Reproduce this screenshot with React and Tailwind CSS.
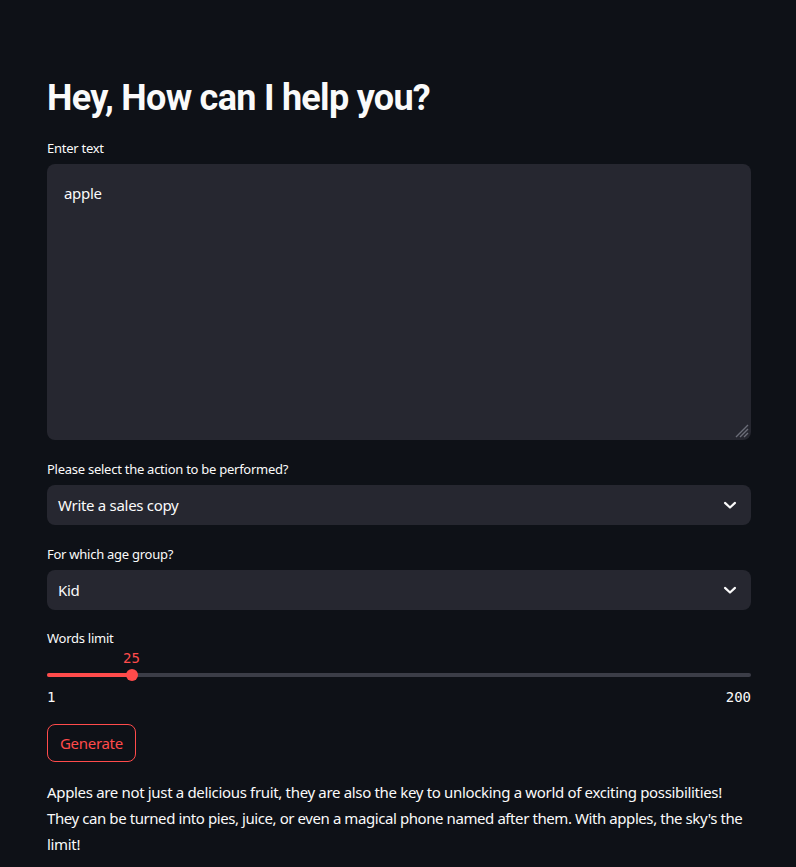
import React from "react";

function Chevron() {
  return (
    <svg width="20" height="20" viewBox="0 0 24 24" fill="none" stroke="#fafafa" strokeWidth="2.6" strokeLinecap="round" strokeLinejoin="round">
      <path d="M6 9.5l6 5.5 6-5.5" />
    </svg>
  );
}

const mono = { fontFamily: '"DejaVu Sans Mono", "Liberation Mono", monospace' };

export default function App() {
  return (
    <div className="min-h-[867px] w-full bg-[#0e1117] text-[#fafafa]" style={{ fontFamily: '"Source Sans Pro", "Noto Sans", sans-serif' }}>
      <div className="ml-[47px] w-[704px] pt-[72px] pb-6">
        <h1 className="text-[36px] font-bold leading-[52px] tracking-[-0.02em] text-[#fafafa]" style={{ fontFamily: 'Roboto, "Noto Sans", sans-serif' }}>Hey, How can I help you?</h1>

        <div className="mt-[14px]">
          <label className="block text-[13px] leading-[20px] tracking-[-0.02em] mb-[6px]">Enter text</label>
          <div className="relative h-[276px] rounded-lg bg-[#262730] px-[17px] pt-[18px]">
            <div className="text-[15px] tracking-[-0.02em] leading-[22px]">apple</div>
            <svg className="absolute right-[2px] bottom-[2px]" width="17" height="17" viewBox="0 0 17 17">
              <path d="M16 4L4 16M16 8L8 16M16 12L12 16" stroke="#6b6d78" strokeWidth="1.4" />
            </svg>
          </div>
        </div>

        <div className="mt-[19px]">
          <label className="block text-[13px] leading-[20px] tracking-[-0.02em] mb-[6px]">Please select the action to be performed?</label>
          <div className="flex h-[40px] items-center justify-between rounded-lg bg-[#262730] pl-[11px] pr-[11px]">
            <span className="text-[15px] tracking-[-0.02em]">Write a sales copy</span>
            <Chevron />
          </div>
        </div>

        <div className="mt-[19px]">
          <label className="block text-[13px] leading-[20px] tracking-[-0.02em] mb-[6px]">For which age group?</label>
          <div className="flex h-[40px] items-center justify-between rounded-lg bg-[#262730] pl-[11px] pr-[11px]">
            <span className="text-[15px] tracking-[-0.02em]">Kid</span>
            <Chevron />
          </div>
        </div>

        <div className="mt-[18px]">
          <label className="block text-[13px] leading-[20px] tracking-[-0.02em]">Words limit</label>
          <div className="relative h-[41px]">
            <div className="absolute left-[76px] top-[2px] text-[14px] leading-[16px] text-[#ff4b4b]" style={mono}>25</div>
            <div className="absolute left-0 right-0 top-[25px] h-[4px] rounded-full bg-[#3b3d47]" />
            <div className="absolute left-0 w-[86px] top-[25px] h-[4px] rounded-full bg-[#ff4b4b]" />
            <div className="absolute left-[79px] top-[21px] h-[12px] w-[12px] rounded-full bg-[#ff4b4b]" />
          </div>
          <div className="flex justify-between text-[14px] leading-[16px]" style={mono}>
            <span>1</span>
            <span>200</span>
          </div>
        </div>

        <button className="mt-[19px] h-[38px] rounded-lg border border-[#ff4b4b] bg-transparent px-[12px] text-[15px] tracking-[-0.02em] text-[#ff4b4b]">Generate</button>

        <p className="mt-[17px] text-[15px] leading-[26px] tracking-[-0.022em] text-[#fafafa]">
          Apples are not just a delicious fruit, they are also the key to unlocking a world of exciting possibilities!{" "}
          <span className="tracking-[-0.028em]">They can be turned into pies, juice, or even a magical phone named after them. With apples, the sky's the</span>{" "}
          limit!
        </p>
      </div>
    </div>
  );
}
